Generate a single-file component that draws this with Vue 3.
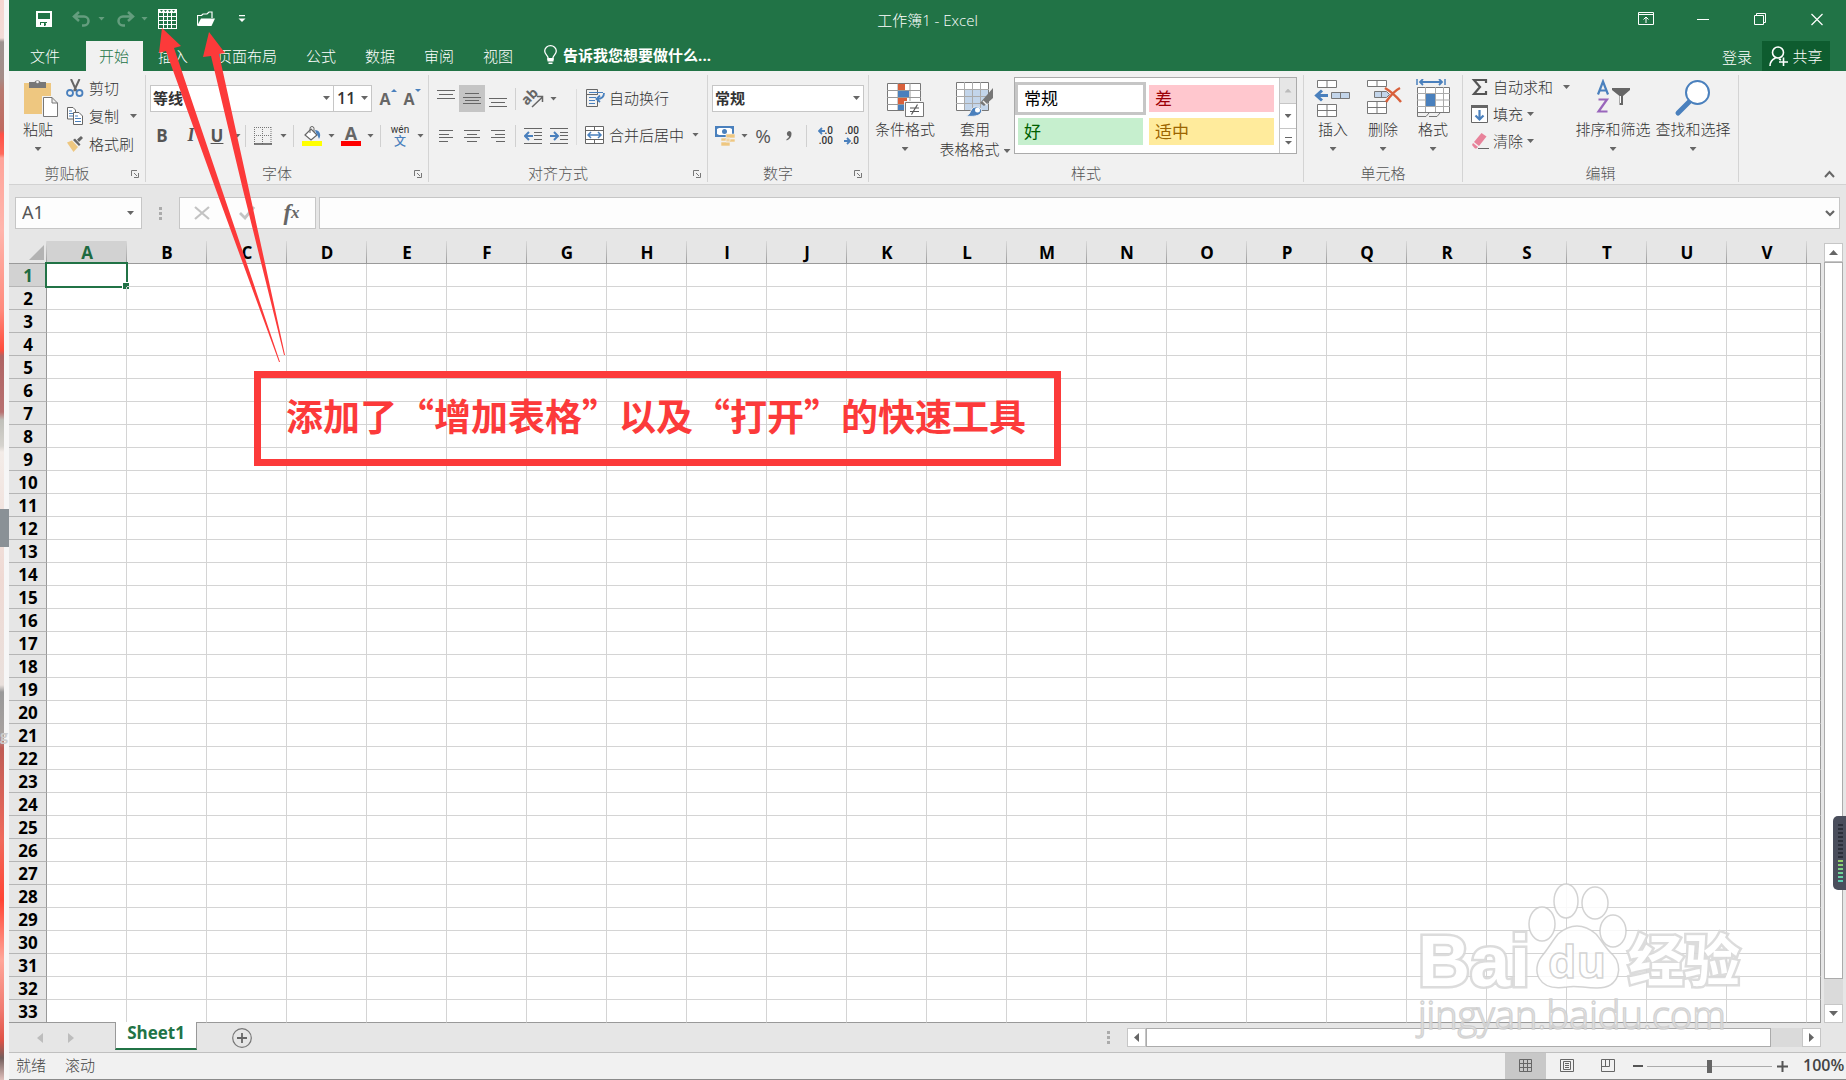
<script setup>
import { ref } from 'vue'

const tabs = ['插入', '页面布局', '公式', '数据', '审阅', '视图']
const columns = 'ABCDEFGHIJKLMNOPQRSTUV'.split('')
const rows = Array.from({ length: 33 }, (_, i) => i + 1)
const fontName = ref('等线')
const fontSize = ref('11')
const numberFormat = ref('常规')
const formula = ref('')
const nameBox = ref('A1')
const zoom = ref(100)
</script>

<template>
  <div class="desktop" lang="zh-CN">
    <aside class="edge">
      <div class="edge-photo"></div>
      <div class="edge-grip"></div>
      <span class="edge-letter">g</span>
    </aside>

    <main class="excel">
      <header class="titlebar">
        <div class="quick">
          <button class="plain" aria-label="保存">
            <svg width="16" height="16" viewBox="0 0 16 16"><path d="M1 1h14v14H1z" fill="none" stroke="#fff" stroke-width="2" /><path d="M1 8h14v3H1z" fill="#fff" /><path d="M1 8h3v8H1zM12 8h3v8h-3zM4 8h8v1H4zM4 11h8v4H10v-2.500H8V15H4z" fill="#fff" /><path d="M5 12h3v3H5z" fill="#fff" /><path d="M2 2h12v5H2zM4 11h1v3H4zM5 11h6v1H5zM8 12h1.500v3H8z" fill="#217346" /></svg>
          </button>
          <button class="plain m20 dim" aria-label="撤消">
            <svg width="20" height="16" viewBox="0 0 20 16"><path d="M7 1L2 5.500 7 10M3 5.500h9a4.500 4.500 0 0 1 0 9h-2" fill="none" stroke="#fff" stroke-width="2.500" /></svg>
          </button>
          <i class="caret white m6 dim"></i>
          <button class="plain m10 dim" aria-label="恢复">
            <svg width="20" height="16" viewBox="0 0 20 16"><path d="M13 1l5 4.500-5 4.500M17 5.500H8a4.500 4.500 0 0 0 0 9h2" fill="none" stroke="#fff" stroke-width="2.500" /></svg>
          </button>
          <i class="caret white m6 dim"></i>
          <button class="plain m10" aria-label="增加表格">
            <svg width="19" height="20" viewBox="0 0 19 20"><path d="M0 0h19v20H0z" fill="#fff" /><path d="M1 4h4v3H1zM6 4h3v3H6zM10 4h3v3h-3zM14 4h4v3h-4zM1 8h4v3H1zM6 8h3v3H6zM10 8h3v3h-3zM14 8h4v3h-4zM1 12h4v3H1zM6 12h3v3H6zM10 12h3v3h-3zM14 12h4v3h-4zM1 16h4v3H1zM6 16h3v3H6zM10 16h3v3h-3zM14 16h4v3h-4zM2 1h3L3.500 3zM6 1h3L7.500 3zM10 1h3l-1.500 2zM14 1h3l-1.500 2z" fill="#217346" /></svg>
          </button>
          <button class="plain m20" aria-label="打开">
            <svg width="18" height="16" viewBox="0 0 18 16"><path d="M.5 14V4.500h4L6 3h4l2-2h3v6" fill="none" stroke="#fff" stroke-width="1.200" /><path d="M0 15L4 7.500h14L14.500 15z" fill="#fff" /></svg>
          </button>
          <button class="plain m20" aria-label="自定义快速访问工具栏">
            <svg width="13" height="8" viewBox="0 0 13 8"><path d="M4 .5h6" stroke="#fff" stroke-width="1.500" /><path d="M3.500 3.500h7L7 7z" fill="#fff" /></svg>
          </button>
        </div>
        <h1>工作簿1 - Excel</h1>
        <div class="window-buttons">
          <button aria-label="功能区显示选项"><svg width="16" height="14" viewBox="0 0 16 14"><path d="M.5.500h15v12H.5zM.5 2.500h15M8 11V5M5.500 7.500L8 5l2.500 2.500" fill="none" stroke="#fff" /></svg></button>
          <button aria-label="最小化"><svg width="12" height="14" viewBox="0 0 12 14"><path d="M0 7.500h12" stroke="#fff" /></svg></button>
          <button aria-label="还原"><svg width="12" height="14" viewBox="0 0 12 14"><path d="M.5 3.500h9v9h-9zM2.500 3V1.500h9v9H10" fill="none" stroke="#fff" /></svg></button>
          <button aria-label="关闭"><svg width="12" height="14" viewBox="0 0 12 14"><path d="M.5 2l11 11M11.500 2l-11 11" stroke="#fff" stroke-width="1.200" /></svg></button>
        </div>
      </header>

      <nav class="tabs">
        <button class="file">文件</button>
        <button class="tab active">开始</button>
        <button v-for="t in tabs" :key="t" class="tab">{{ t }}</button>
        <button class="tell">
          <svg width="13" height="20" viewBox="0 0 13 20"><path d="M4 14.500v-2C3.500 10.500.7 9 .7 6a5.800 5.300 0 0 1 11.600 0c0 3-2.800 4.500-3.300 6.500v2z" fill="none" stroke="#fff" stroke-width="1.300" /><path d="M3.500 13h6v3.500h-6zM4.500 17.500h4V19h-4z" fill="#fff" /></svg>
          <b>告诉我您想要做什么...</b>
        </button>
        <button class="login">登录</button>
        <button class="share">
          <svg width="19" height="21" viewBox="0 0 19 21"><circle cx="9" cy="6.500" r="5.500" fill="none" stroke="#fff" stroke-width="1.600" /><path d="M1 20c0-4 2-6.500 5.500-8M10 13l2 1M10 16h9M14.500 11.500V20" fill="none" stroke="#fff" stroke-width="1.600" /></svg>
          共享
        </button>
      </nav>

      <section class="ribbon">
        <div class="group clip">
          <div class="body">
            <button class="big w46">
              <svg width="40" height="38" viewBox="0 0 40 38"><path d="M6 4h27v31H6z" fill="#eec780" /><path d="M11 9V3h5.500a3.500 3.500 0 0 1 6 0H28v6z" fill="#777" /><circle cx="19.500" cy="3" r="1.300" fill="#f1f1f1" /><path d="M24 17h16v21H24z" fill="#f1f1f1" /><path d="M25.500 18.500h8.500l5.500 5.500v13.500h-14zM34 18.500V24h5.500" fill="#fff" stroke="#777" /></svg>
              <span>粘贴</span><i class="caret"></i>
            </button>
            <div class="list">
              <button class="row28"><svg width="18" height="18" viewBox="0 0 18 18"><path d="M5 0l5.500 12M13.500 0L8 12" stroke="#666" stroke-width="2" /><circle cx="4" cy="14" r="3" fill="none" stroke="#4a80bd" stroke-width="1.800" /><circle cx="13.500" cy="14" r="3" fill="none" stroke="#4a80bd" stroke-width="1.800" /></svg>剪切</button>
              <button class="row28"><svg width="18" height="18" viewBox="0 0 18 18"><path d="M1.500.500H7L9.500 3v9h-8z" fill="#fff" stroke="#666" /><path d="M3 4h3M3 6.500h4M3 9h4" stroke="#4a80bd" /><path d="M7.500 5.500H13l3.500 3.500v8.500h-9z" fill="#fff" stroke="#666" /><path d="M9 9h3M9 11.500h6M9 14.500h6" stroke="#4a80bd" /></svg>复制<i class="caret m6"></i></button>
              <button class="row28"><svg width="18" height="18" viewBox="0 0 18 18"><path d="M1 7.500l5-2 6 6.500-4.500 5z" fill="#eec780" /><path d="M7 5l2-1.500 5.500 6L13 11zM11 4.500l4-3.500 2 2-4 4z" fill="#666" /></svg>格式刷</button>
            </div>
          </div>
          <div class="foot"><span>剪贴板</span><button class="launch" aria-label="剪贴板选项"><svg width="8" height="8"><path d="M.5 6V.500H6M3 3l3 3M7.500 3v4.500H3" fill="none" stroke="#777" /></svg></button></div>
        </div>

        <div class="group font">
          <div class="body stack">
            <div class="line">
              <label class="combo w184"><select v-model="fontName" aria-label="字体"><option>等线</option></select><i class="caret"></i></label>
              <label class="combo w39"><select v-model="fontSize" aria-label="字号"><option>11</option></select><i class="caret"></i></label>
              <button class="plain m6 grow-font" aria-label="增大字号"><b>A</b><svg width="6" height="4"><path d="M0 3l3-3 3 3z" fill="#4a80bd" /></svg></button>
              <button class="plain m4 grow-font" aria-label="减小字号"><b>A</b><svg width="6" height="4"><path d="M0 0l3 3 3-3z" fill="#4a80bd" /></svg></button>
            </div>
            <div class="line">
              <button class="letter bold">B</button>
              <button class="letter italic m6">I</button>
              <button class="letter under m4">U</button>
              <i class="caret m6"></i><i class="sep m4"></i>
              <button class="plain m8" aria-label="边框"><svg width="18" height="18" viewBox="0 0 18 18"><path d="M.5 0v17M17 0v17M8.500 0v17M0 .5h18M0 8.500h18" stroke="#777" stroke-dasharray="1 1" /><path d="M0 17h18" stroke="#555" stroke-width="1.500" /></svg></button>
              <i class="caret m8"></i><i class="sep m6"></i>
              <button class="plain m8" aria-label="填充颜色"><svg width="20" height="20" viewBox="0 0 20 20"><path d="M3 9l6-6 6 6-6 5z" fill="#fff" stroke="#666" stroke-width="1.200" /><path d="M8 7V2.500a2 2 0 0 1 4 0V6" fill="none" stroke="#666" /><path d="M13 4c4 0 7 4 4 9-1-2-1-4-3-6z" fill="#4a80bd" /><path d="M0 15h20v5H0z" fill="#ff0" /></svg></button>
              <i class="caret m6"></i>
              <button class="plain m6 ink"><b>A</b></button>
              <i class="caret m6"></i><i class="sep m6"></i>
              <button class="plain m10 pinyin"><span>wén</span><b>文</b></button>
              <i class="caret m8"></i>
            </div>
          </div>
          <div class="foot"><span>字体</span><button class="launch" aria-label="字体选项"><svg width="8" height="8"><path d="M.5 6V.500H6M3 3l3 3M7.500 3v4.500H3" fill="none" stroke="#777" /></svg></button></div>
        </div>

        <div class="group align">
          <div class="body">
            <div class="stack">
              <div class="line">
                <button class="cell" aria-label="顶端对齐"><svg width="18" height="18"><path d="M0 .5h18M2 4.500h14M0 8.500h18" stroke="#666" /></svg></button>
                <button class="cell on" aria-label="垂直居中"><svg width="18" height="18"><path d="M2 3.500h14M0 7.500h18M2 10.500h14M0 13.500h18" stroke="#666" /></svg></button>
                <button class="cell" aria-label="底端对齐"><svg width="18" height="18"><path d="M0 8.500h18M2 12.500h14M0 16.500h18" stroke="#666" /></svg></button>
                <i class="sep m4"></i>
                <button class="plain m8" aria-label="方向"><svg class="spill" width="20" height="20" viewBox="0 0 20 20"><text transform="translate(6 8) rotate(-45)" y="4" text-anchor="middle" font-size="14" font-weight="700" font-family="Open Sans, sans-serif" fill="#666">ab</text><path d="M8 18L18 8.500M13 7.500h5.500V13" fill="none" stroke="#666" stroke-width="1.500" /></svg></button>
                <i class="caret m6"></i>
              </div>
              <div class="line">
                <button class="cell" aria-label="左对齐"><svg width="18" height="12"><path d="M2 .5h14M2 4.500h10M2 7.500h14M2 11.500h9" stroke="#666" /></svg></button>
                <button class="cell" aria-label="居中"><svg width="18" height="12"><path d="M1 .5h16M4 4.500h10M1 7.500h16M4 11.500h10" stroke="#666" /></svg></button>
                <button class="cell" aria-label="右对齐"><svg width="18" height="12"><path d="M2 .5h14M6 4.500h10M2 7.500h14M7 11.500h9" stroke="#666" /></svg></button>
                <i class="sep m4"></i>
                <button class="plain m8" aria-label="减少缩进量"><svg width="18" height="18"><path d="M0 1.500h18M10 5.500h8M10 8.500h8M10 12.500h8M0 16.500h18" stroke="#666" /><path d="M9 9H2M5 5L1 9l4 4" fill="none" stroke="#4a80bd" stroke-width="2" /></svg></button>
                <button class="plain m8" aria-label="增加缩进量"><svg width="18" height="18"><path d="M0 1.500h18M10 5.500h8M10 8.500h8M10 12.500h8M0 16.500h18" stroke="#666" /><path d="M0 9h7M4 5l4 4-4 4" fill="none" stroke="#4a80bd" stroke-width="2" /></svg></button>
              </div>
            </div>
            <i class="sep tall"></i>
            <div class="stack pad8">
              <button class="line gap4"><svg width="20" height="20" viewBox="0 0 20 20"><path d="M1.500 1.500h11v5M1.500 6.500h11M1.500 1.500v17h11v-7M1.500 6.500h11" fill="none" stroke="#666" /><path d="M4 4.500h14M4 9.500h7M4 12.500h6M4 15.500h6" stroke="#4a80bd" /><path d="M19 5c0 5-3 6-7 6M15 7.500L11.500 11l3.500 3" fill="none" stroke="#4a80bd" stroke-width="1.800" /></svg>自动换行</button>
              <button class="line gap4"><svg width="20" height="20" viewBox="0 0 20 20"><path d="M.5 1.500h18v17H.5zM.5 5.500h18M.5 14.500h18M9.500 1.500v4M9.500 14.500v4" fill="#fff" stroke="#666" /><path d="M3 10h13M6 7l-3 3 3 3M13 7l3 3-3 3" fill="none" stroke="#4a80bd" stroke-width="1.500" /></svg>合并后居中<i class="caret m4"></i></button>
            </div>
          </div>
          <div class="foot"><span>对齐方式</span><button class="launch" aria-label="对齐选项"><svg width="8" height="8"><path d="M.5 6V.500H6M3 3l3 3M7.500 3v4.500H3" fill="none" stroke="#777" /></svg></button></div>
        </div>

        <div class="group number">
          <div class="body stack">
            <div class="line">
              <label class="combo w152"><select v-model="numberFormat" aria-label="数字格式"><option>常规</option></select><i class="caret"></i></label>
            </div>
            <div class="line pad3">
              <button class="plain" aria-label="会计数字格式"><svg width="20" height="20" viewBox="0 0 20 20"><path d="M0 0h19v11H0z" fill="#4a80bd" /><path d="M2 3l2-1h11l2 1v5l-2 1H4L2 8z" fill="#fff" /><circle cx="9.500" cy="5.500" r="2.500" fill="#4a80bd" /><path d="M11 8h9v4h-9zM11 13h9v3h-9zM6 12h9v3H6zM6 16h9v4H6z" fill="#eec780" stroke="#f1f1f1" stroke-width=".6" /></svg></button>
              <i class="caret m6"></i>
              <button class="plain m6 percent">%</button>
              <button class="plain m12 comma" aria-label="千位分隔样式"><svg width="8" height="12" viewBox="0 0 8 12"><path d="M4 1a2.800 2.800 0 0 1 2.500 3c0 3-2 5.500-5 6.500V9.200C3 8.500 4 7.500 4 6.300A2.700 2.700 0 0 1 4 1z" fill="#666" /></svg></button>
              <i class="sep m12"></i>
              <button class="plain m8 decimals" aria-label="增加小数位数"><span><svg width="7" height="8"><path d="M7 4H2M4 1L1 4l3 3" fill="none" stroke="#4a80bd" stroke-width="1.800" /></svg>.0</span><span>.00</span></button>
              <button class="plain m8 decimals" aria-label="减少小数位数"><span>.00</span><span><svg width="7" height="8"><path d="M0 4h5M3 1l3 3-3 3" fill="none" stroke="#4a80bd" stroke-width="1.800" /></svg>.0</span></button>
            </div>
          </div>
          <div class="foot"><span>数字</span><button class="launch" aria-label="数字选项"><svg width="8" height="8"><path d="M.5 6V.500H6M3 3l3 3M7.500 3v4.500H3" fill="none" stroke="#777" /></svg></button></div>
        </div>

        <div class="group styles">
          <div class="body">
            <button class="big w64">
              <svg width="38" height="38" viewBox="0 0 38 38"><path d="M1.500 4.500h33v27h-33z" fill="#fff" stroke="#777" /><path d="M1 11.500h34M1 18.500h34M1 25.500h34M12 4v27M24 4v27" stroke="#999" /><path d="M12 5h7v6h-7zM12 19h9v6h-9z" fill="#d9603b" /><path d="M12 12h11v6H12zM12 26h7v5h-7z" fill="#4a80bd" /><path d="M18 22h20v16H18z" fill="#f1f1f1" /><path d="M19.500 23.500h18v14h-18z" fill="#fff" stroke="#777" /><path d="M24 29h9M24 32.500h9M31.500 25.500l-6 10" stroke="#555" stroke-width="1.200" /></svg>
              <span>条件格式</span><i class="caret"></i>
            </button>
            <button class="big w72">
              <svg width="38" height="38" viewBox="0 0 38 38"><path d="M.5 3.500h32v28H.5z" fill="#fff" stroke="#777" /><path d="M9 11h23v20H9z" fill="#c3d5ea" /><path d="M0 10.500h33M0 17.500h33M0 24.500h33M8.500 3v28M16.500 3v28M24.500 3v28" stroke="#aaa" /><path d="M37 9v10l-9 8-4-3z" fill="#777" /><path d="M27 22l4 4" stroke="#f1f1f1" stroke-width="1.500" /><path d="M10 37c5-1 4-8 9-9 4-1 8 2 6 6-2 3-8 4-15 3z" fill="#4a80bd" stroke="#f1f1f1" /><circle cx="21.500" cy="31" r="2.500" fill="#fff" /></svg>
              <span>套用</span><span>表格格式<i class="caret m4"></i></span>
            </button>
            <div class="gallery">
              <div class="swatches">
                <button class="swatch normal">常规</button><button class="swatch bad">差</button>
                <button class="swatch good">好</button><button class="swatch neutral">适中</button>
              </div>
              <div class="gallery-nav">
                <button class="off" aria-label="上一行"><i class="caret up"></i></button>
                <button aria-label="下一行"><i class="caret"></i></button>
                <button aria-label="更多"><svg width="7" height="8"><path d="M0 .5h7" stroke="#666" /><path d="M0 4h7L3.500 7.500z" fill="#666" /></svg></button>
              </div>
            </div>
          </div>
          <div class="foot"><span>样式</span></div>
        </div>

        <div class="group cells">
          <div class="body">
            <button class="big w50"><svg width="38" height="38" viewBox="0 0 38 38"><path d="M3.500 1.500h19v7h-19zM13 1.500v7M3.500 25.500h19v12h-19zM3.500 31.500h19M13 25.500v12" fill="#fff" stroke="#777" /><path d="M17.500 13.500h18v6h-18zM26.500 13.500v6" fill="#c3d5ea" stroke="#777" /><path d="M14 16.500H3M8 11.500l-5.500 5L8 21.500" fill="none" stroke="#4a80bd" stroke-width="3" /></svg><span>插入</span><i class="caret"></i></button>
            <button class="big w50"><svg width="38" height="38" viewBox="0 0 38 38"><path d="M3.500 1.500h19v6h-19zM13 1.500v6M3.500 22.500h19v12h-19zM3.500 28.500h19M13 22.500v12" fill="#fff" stroke="#777" /><path d="M10.500 12.500h12l3 3-3 3h-12zM17.500 12.500v6" fill="#c3d5ea" stroke="#777" /><path d="M21 9c5 3 11 8 16 14M36 9c-6 3-10 8-14 14" fill="none" stroke="#d9603b" stroke-width="2.500" /></svg><span>删除</span><i class="caret"></i></button>
            <button class="big w50"><svg width="38" height="38" viewBox="0 0 38 38"><path d="M3 0v6M31 0v6" stroke="#4a80bd" stroke-width="1.500" /><path d="M6 3h22M9 0L6 3l3 3M25 0l3 3-3 3" fill="none" stroke="#4a80bd" stroke-width="1.800" /><path d="M3.500 8.500h32v25h-32z" fill="#fff" stroke="#777" /><path d="M3 14.500h33M3 27.500h33M11.500 8v25M21.500 8v25M29.500 8v25M3 21h33" stroke="#aaa" /><path d="M12 15h9v12h-9z" fill="#4a80bd" /><path d="M3.500 33v4.500H12l3-3.500M15 37.500h8l3-3.500" fill="none" stroke="#777" /></svg><span>格式</span><i class="caret"></i></button>
          </div>
          <div class="foot"><span>单元格</span></div>
        </div>

        <div class="group edit">
          <div class="body">
            <div class="list edit-list">
              <button class="row27"><svg width="18" height="18" viewBox="0 0 18 18"><path d="M15 5V2H3l6 7-6 7h12v-3" fill="none" stroke="#555" stroke-width="2.200" /></svg>自动求和<i class="caret m6"></i></button>
              <button class="row27"><svg width="18" height="18" viewBox="0 0 18 18"><path d="M.5.500h16v17H.5z" fill="#fff" stroke="#666" /><path d="M0 0h17v3H0z" fill="#666" /><path d="M8.500 5v9M4.500 10.500l4 4 4-4" fill="none" stroke="#4a80bd" stroke-width="2.200" /></svg>填充<i class="caret"></i></button>
              <button class="row27"><svg width="18" height="18" viewBox="0 0 18 18"><path d="M10.500 1l5 3.500L8 14l-5-4z" fill="#e8829a" /><path d="M2 11l5 4-1.500 1.500H4L1 13z" fill="#e8829a" /><path d="M7 16.500h11" stroke="#666" /></svg>清除<i class="caret"></i></button>
            </div>
            <button class="big w80"><svg width="38" height="38" viewBox="0 0 38 38"><path d="M4 15.500L9 2.500l5 13M5.800 11.500h6.500" fill="none" stroke="#4a80bd" stroke-width="2.200" /><path d="M4.500 20.500h8.500l-8.500 12h9" fill="none" stroke="#9966bb" stroke-width="2.200" /><path d="M18 9h18v2l-7 6v9h-3.500v-9L18 11z" fill="#666" /><path d="M26.500 17v7" stroke="#fff" /></svg><span>排序和筛选</span><i class="caret"></i></button>
            <button class="big w80"><svg width="38" height="38" viewBox="0 0 38 38"><path d="M4 34l12-12" stroke="#4a80bd" stroke-width="5" stroke-linecap="round" /><circle cx="23.500" cy="13.500" r="11.500" fill="#fff" stroke="#4a80bd" stroke-width="2" /></svg><span>查找和选择</span><i class="caret"></i></button>
          </div>
          <div class="foot"><span>编辑</span></div>
        </div>
        <button class="collapse" aria-label="折叠功能区"><svg width="11" height="8"><path d="M1 7l4.500-5L10 7" fill="none" stroke="#666" stroke-width="2" /></svg></button>
      </section>

      <section class="formula-bar">
        <label class="name-box"><input v-model="nameBox" aria-label="名称框"><i class="caret"></i></label>
        <i class="dots"></i>
        <div class="fx-box">
          <button aria-label="取消"><svg width="16" height="14"><path d="M1 1l14 12M15 1L1 13" stroke="#c3c3c3" stroke-width="2.200" /></svg></button>
          <button aria-label="输入"><svg width="16" height="14"><path d="M1 7l5 5 9-11" fill="none" stroke="#c3c3c3" stroke-width="2.800" /></svg></button>
          <button class="fx"><i>f</i><i>x</i></button>
        </div>
        <label class="formula"><input v-model="formula" aria-label="编辑栏"><svg width="10" height="7"><path d="M1 1l4 4 4-4" fill="none" stroke="#666" stroke-width="2.200" /></svg></label>
      </section>

      <section class="work">
        <div class="sheet">
          <table>
            <colgroup><col class="c-head"><col v-for="c in columns" :key="c" class="c-cell"><col></colgroup>
            <thead>
              <tr>
                <th class="corner"><svg width="15" height="15"><path d="M15 0v15H0z" fill="#b3b3b3" /></svg></th>
                <th v-for="c in columns" :key="c" scope="col" :class="{ sel: c === 'A' }">{{ c }}</th>
                <th class="last"></th>
              </tr>
            </thead>
            <tbody>
              <tr v-for="r in rows" :key="r">
                <th scope="row" :class="{ sel: r === 1 }">{{ r }}</th>
                <td v-for="c in columns" :key="c"><div v-if="r === 1 && c === 'A'" class="cursor"></div></td>
                <td class="last"></td>
              </tr>
            </tbody>
          </table>
        </div>
        <div class="vscroll">
          <button aria-label="向上滚动"><svg width="9" height="5"><path d="M0 5l4.500-5L9 5z" fill="#666" /></svg></button>
          <div class="vthumb"></div>
          <div class="vtrack"></div>
          <button aria-label="向下滚动"><svg width="9" height="5"><path d="M0 0l4.500 5L9 0z" fill="#666" /></svg></button>
        </div>
      </section>

      <section class="sheet-bar">
        <button class="nav" aria-label="上一个工作表"><svg width="6" height="10"><path d="M6 0v10L0 5z" fill="#bdbdbd" /></svg></button>
        <button class="nav" aria-label="下一个工作表"><svg width="6" height="10"><path d="M0 0v10l6-5z" fill="#bdbdbd" /></svg></button>
        <button class="sheet-tab">Sheet1</button>
        <button class="add" aria-label="新工作表"><svg width="20" height="20"><circle cx="10" cy="10" r="9.300" fill="none" stroke="#777" stroke-width="1.200" /><path d="M10 5v10M5 10h10" stroke="#666" stroke-width="1.800" /></svg></button>
        <i class="dots"></i>
        <div class="hscroll">
          <button aria-label="向左滚动"><svg width="5" height="9"><path d="M5 0v9L0 4.500z" fill="#666" /></svg></button>
          <div class="hthumb"></div>
          <div class="htrack"></div>
          <button aria-label="向右滚动"><svg width="5" height="9"><path d="M0 0v9l5-4.500z" fill="#666" /></svg></button>
        </div>
      </section>

      <footer class="status">
        <span>就绪</span><span>滚动</span>
        <div class="views">
          <button class="on" aria-label="普通"><svg width="14" height="14"><path d="M.5.500h12v12H.5zM4.500 0v13M8.500 0v13M0 4.500h13M0 8.500h13" fill="none" stroke="#666" /></svg></button>
          <button aria-label="页面布局"><svg width="14" height="14"><path d="M.5.500h13v12H.5zM3.500 2.500h7v8h-7zM5 4.500h4M5 6.500h4M5 8.500h4" fill="none" stroke="#666" /></svg></button>
          <button aria-label="分页预览"><svg width="14" height="14"><path d="M.5.500h13v12H.5zM4.500 0v7M0 7.500h8.500V0" fill="none" stroke="#666" /></svg></button>
        </div>
        <button class="zoom-step" aria-label="缩小"><svg width="10" height="10"><path d="M0 5h10" stroke="#555" stroke-width="2" /></svg></button>
        <input v-model="zoom" type="range" min="10" max="190" aria-label="缩放级别">
        <button class="zoom-step" aria-label="放大"><svg width="11" height="11"><path d="M0 5.500h11M5.500 0v11" stroke="#555" stroke-width="2" /></svg></button>
        <b class="percent-label">{{ zoom }}%</b>
      </footer>
    </main>

    <div class="callout">添加了“增加表格”以及“打开”的快速工具</div>
    <svg class="arrows" width="300" height="370" viewBox="0 0 300 370">
      <path d="M162 28L181 46 174 48 222 190 280 362 279 362 216 190 166 51 159 53z" fill="#fc3a3a" />
      <path d="M209 32L225 53 219 54 249 190 285 355 284 355 243 190 211 56 203 57z" fill="#fc3a3a" />
    </svg>

    <svg class="watermark" width="340" height="170" viewBox="0 0 340 170">
      <g fill="#fff" fill-opacity=".85" stroke="#c8c8c8" stroke-opacity=".8" stroke-width="1.500">
        <g class="thick">
          <text x="8" y="106" font-size="72" font-weight="700" font-family="Liberation Sans, sans-serif">Bai</text>
          <text x="218" y="101" font-size="56" font-weight="700" font-family="Noto Sans CJK SC, sans-serif">经验</text>
        </g>
        <ellipse cx="132" cy="44" rx="13" ry="17" /><ellipse cx="156" cy="21" rx="12" ry="17" /><ellipse cx="185" cy="23" rx="13" ry="16" /><ellipse cx="203" cy="51" rx="13" ry="16" />
        <path d="M148 54q19-16 38 0c6 7 10 15 17 21 10 10 8 33-16 33-14 0-20-3-30-1-30 5-36-18-25-31 6-7 11-16 16-22z" />
        <text x="138" y="98" font-size="45" font-weight="700" font-family="Open Sans, sans-serif">du</text>
        <text x="8" y="149" font-size="38" font-family="Open Sans, sans-serif">jingyan.baidu.com</text>
      </g>
    </svg>
    <div class="meter"><div class="meter-bars"></div></div>
  </div>
</template>

<style>
body { margin: 0; background: #e6e6e6; overflow: hidden; }
</style>

<style scoped>
* { box-sizing: border-box; }
.desktop { display: flex; position: relative; min-height: 100vh; font: 15px/20px "Open Sans", "Noto Sans CJK SC", sans-serif; font-weight: 300; color: #333; }
button { border: 0; background: none; padding: 0; margin: 0; font: inherit; color: inherit; display: flex; align-items: center; justify-content: center; white-space: nowrap; }
svg { display: block; flex: none; }
b { font-weight: 700; }

.edge { position: relative; flex: none; width: 9px; background: #f6f6f6; }
.edge-photo { width: 4px; height: 100%; background: linear-gradient(#f5d5d0 0, #f3dcd8 38px, #9c9290 42px, #a58d88 78px, #b97a70 90px, #c06a60 130px, #ff5046 134px, #ff6a5c 154px, #ffa49a 158px, #ffb5ac 230px, #ff8a7c 310px, #ff4c3c 350px, #b06464 356px, #b87070 412px, #c0c0ba 420px, #d5d3ce 446px, #f3ece8 452px, #efd9d3 580px, #e9e0dc 685px, #999 692px, #a8a2a0 735px, #bf5c55 748px, #f06a5c 840px, #ff4434 900px, #ffa79a 960px, #f07a70 1010px, #e05246 1040px, #74605e 1058px, #e0c0bc 1080px); }
.edge-grip { position: absolute; left: 0; top: 509px; width: 9px; height: 38px; background: #8a9196; }
.edge-letter { position: absolute; left: 0; top: 726px; width: 9px; color: #ccc; font-size: 14px; font-weight: 700; }

.excel { flex: 1; min-width: 0; display: flex; flex-direction: column; border-bottom: 1px solid #8a8a8a; background: #e6e6e6; }

.titlebar { display: grid; grid-template-columns: 1fr auto 1fr; height: 41px; background: #217346; color: #fff; }
.quick { display: flex; align-items: center; padding: 0 0 4px 27px; }
.dim { opacity: .3; }
h1 { margin: 0; font-size: 15px; line-height: 40px; font-weight: 300; }
.window-buttons { display: flex; justify-content: flex-end; padding-right: 1px; }
.window-buttons button { width: 57px; height: 38px; }

.m2 { margin-left: 2px; } .m4 { margin-left: 4px; } .m6 { margin-left: 6px; } .m8 { margin-left: 8px; }
.m10 { margin-left: 10px; } .m12 { margin-left: 12px; } .m20 { margin-left: 20px; }
.caret { display: inline-block; flex: none; width: 7px; height: 4px; background: #666; clip-path: polygon(0 0, 100% 0, 50% 100%); vertical-align: middle; }
.caret.white { background: #fff; }
.caret.up { clip-path: polygon(0 100%, 100% 100%, 50% 0); background: #bbb; }

.tabs { display: flex; height: 30px; background: #217346; color: #fff; }
.file { width: 77px; padding-right: 5px; }
.tab { padding: 0 14px 1px 13px; margin-right: 2px; }
.tab.active { background: #f1f1f1; color: #217346; }
.tell { gap: 6px; margin-left: 15px; padding-bottom: 3px; }
.login { margin-left: auto; padding-top: 2px; margin-right: 10px; }
.share { width: 68px; gap: 4px; margin-right: 16px; background: #0e5c2f; }

.ribbon { display: flex; position: relative; padding: 4px 0 2px; background: #f1f1f1; border-bottom: 1px solid #d2d2d2; }
.group { display: flex; flex-direction: column; flex: none; border-right: 1px solid #d4d4d4; }
.clip { width: 137px; } .font { width: 283px; } .align { width: 279px; } .number { width: 161px; }
.styles { width: 435px; } .cells { width: 159px; } .edit { width: 276px; }
.body { display: flex; height: 91px; padding-left: 4px; align-items: flex-start; }
.foot { display: flex; height: 16px; line-height: 14px; color: #555; }
.foot span { flex: 1; text-align: center; }
.launch { width: 20px; height: 16px; }
.big { flex-direction: column; justify-content: flex-start; padding-top: 4px; flex: none; }
.big svg { margin-bottom: 2px; }
.big > .caret { margin-top: 8px; }
.w46 { width: 46px; margin-left: 2px; } .w50 { width: 50px; } .w64 { width: 64px; } .w72 { width: 72px; margin-left: 2px; } .w80 { width: 80px; }
.list { display: flex; flex-direction: column; align-items: flex-start; margin-left: 5px; }
.row28 { height: 28px; gap: 5px; padding-bottom: 2px; }
.row27 { height: 27px; gap: 4px; padding-bottom: 3px; }
.edit-list { width: 102px; margin-left: 4px; }

.stack { display: flex; flex-direction: column; justify-content: flex-start; align-items: flex-start; gap: 10px; padding-top: 10px; }
.line { display: flex; align-items: center; height: 27px; }
button.line { padding-bottom: 2px; }
.gap4 { gap: 4px; } .pad3 { padding-left: 3px; } .pad8 { padding-left: 8px; }
.sep { width: 1px; height: 22px; background: #d0d0d0; }
.sep.tall { height: 56px; margin: 14px 0 0 8px; background: #dcdcdc; }
.combo { position: relative; display: block; height: 27px; }
.combo select { appearance: none; width: 100%; height: 100%; border: 1px solid #c6c6c6; border-radius: 0; background: #fff; padding: 0 2px 1px; font: 600 15px/20px "Open Sans", "Noto Sans CJK SC", sans-serif; color: #333; }
.combo .caret { position: absolute; right: 4px; top: 11px; }
.w184 { width: 184px; } .w39 { width: 39px; margin-left: -1px; } .w152 { width: 152px; }
.combo.w39 select { padding-left: 3px; font-size: 16px; }
.grow-font { width: 20px; align-items: flex-start; color: #666; font-size: 16px; }
.letter { width: 22px; height: 27px; color: #555; font-size: 17px; }
.bold { width: 24px; font-weight: 700; }
.italic { font: italic 700 18px "Liberation Serif", serif; }
.under { font-weight: 700; text-decoration: underline; }
.ink { width: 20px; height: 20px; font-size: 18px; line-height: 14px; align-items: flex-start; border-bottom: 5px solid #f00; color: #666; }
.pinyin { width: 18px; flex-direction: column; font: 400 10px/11px Roboto, sans-serif; }
.pinyin b { color: #4a80bd; font: 500 12px/12px "Noto Sans CJK SC", sans-serif; }
.spill { overflow: visible; }
.cell { width: 26px; height: 27px; }
.cell.on { background: #c5c5c5; }
.percent { width: 18px; font-size: 19px; font-weight: 400; color: #555; }
.comma { width: 10px; }
.decimals { width: 18px; flex-direction: column; align-items: flex-end; font: 500 10px/10px Roboto, sans-serif; }
.decimals span { display: flex; align-items: center; }

.gallery { display: flex; margin: 2px 0 0 3px; width: 283px; height: 77px; border: 1px solid #ababab; background: #fff; }
.swatches { display: grid; flex: 1; grid-template-columns: 125px 125px; grid-template-rows: 27px 27px; gap: 6px; padding: 7px 0 0 3px; }
.swatch { justify-content: flex-start; padding-left: 6px; font-size: 17px; font-weight: 400; }
.normal { color: #000; outline: 3px solid #c6c6c6; }
.bad { background: #ffc7ce; color: #9c0006; }
.good { background: #c6efce; color: #006100; }
.neutral { background: #ffeb9c; color: #9c6500; }
.gallery-nav { display: grid; grid-template-rows: repeat(3, 1fr); width: 17px; border-left: 1px solid #c6c6c6; }
.gallery-nav button + button { border-top: 1px solid #c6c6c6; }
.off { background: #e6e6e6; }
.collapse { position: absolute; right: 11px; bottom: 6px; }

.formula-bar { display: flex; align-items: center; height: 56px; padding: 0 6px; }
.name-box { position: relative; width: 127px; height: 32px; }
.name-box input, .formula input { width: 100%; height: 100%; border: 1px solid #c6c6c6; background: #fdfdfd; padding: 0 6px 2px; font: 18px "Noto Sans", sans-serif; color: #555; border-radius: 0; display: block; }
.name-box .caret { position: absolute; right: 8px; top: 14px; }
.dots { width: 3px; height: 13px; margin: 0 17px; background: repeating-linear-gradient(#ababab 0 3px, transparent 3px 5px); }
.fx-box { display: flex; width: 137px; height: 32px; border: 1px solid #c6c6c6; background: #fdfdfd; }
.fx-box button { flex: 1; padding-right: 2px; }
.fx-box .fx { font: 700 23px/30px "Liberation Serif", serif; color: #666; }
.fx i + i { font-size: 17px; }
.formula { position: relative; flex: 1; height: 32px; margin-left: 3px; }
.formula svg { position: absolute; right: 5px; top: 13px; }

.work { display: flex; flex: 1; }
.sheet { flex: 1; min-width: 0; overflow: hidden; }
table { width: 100%; table-layout: fixed; border-collapse: separate; border-spacing: 0; background: #fff; }
.c-head { width: 38px; } .c-cell { width: 80px; }
th, td { height: 23px; padding: 0; line-height: 20px; overflow: hidden; }
td { position: relative; overflow: visible; border-right: 1px solid #d4d4d4; border-bottom: 1px solid #d4d4d4; }
th { padding: 2px 0 0 1px; background: #e6e6e6; color: #000; font-size: 17px; font-weight: 700; }
thead th { border-bottom: 1px solid #999; border-right: 1px solid; border-image: linear-gradient(#dcdcdc, #999) 1; }
tbody th { border-right: 1px solid #999; border-bottom: 1px solid #b5b5b5; }
th.sel { background: #d2d2d2; color: #1e6a41; }
.corner svg { margin: 0 2px 2px auto; }
td.last { border-right: 1px solid #999; }
th.last { border: 0; border-bottom: 1px solid #999; }
tbody tr:last-child > * { border-bottom-color: #999; }
.cursor { position: absolute; left: -2px; top: -2px; width: 83px; height: 26px; border: 2px solid #217346; }
.cursor::after { content: ""; position: absolute; right: -3px; bottom: -3px; width: 6px; height: 6px; background: #217346; border: 1px solid #fff; border-width: 1px 0 0 1px; }

.vscroll { display: flex; flex-direction: column; flex: none; width: 20px; margin: 2px 2px 0 3px; }
.vscroll button, .hscroll button { flex: none; width: 19px; height: 19px; background: #fff; border: 1px solid #c6c6c6; }
.vthumb { flex: 1; width: 19px; background: #fff; border: 1px solid #ababab; }
.vtrack { width: 19px; height: 25px; background: #dadada; }

.sheet-bar { display: flex; align-items: center; height: 30px; border-bottom: 1px solid #c0c0c0; padding-right: 25px; }
.nav { width: 6px; margin-left: 28px; }
.nav + .nav { margin-left: 25px; }
.sheet-tab { position: relative; align-self: flex-start; width: 82px; height: 28px; margin: -1px 0 0 41px; padding-bottom: 4px; background: #fff; border: 1px solid #999; border-top: 0; border-bottom: 2px solid #217346; color: #217346; font-size: 17px; font-weight: 700; }
.add { margin: 0 auto 0 35px; }
.hscroll { display: flex; width: 694px; height: 19px; }
.hthumb { flex: 1; background: #fff; border: 1px solid #ababab; }
.htrack { width: 31px; background: #dadada; }

.status { display: flex; align-items: center; height: 26px; background: #f1f1f1; color: #444; }
.status > span { margin-left: 7px; width: 42px; padding-bottom: 2px; }
.views { display: flex; margin-left: auto; height: 26px; }
.views button { width: 41px; }
.views .on { background: #c8c8c8; }
.zoom-step { width: 12px; margin: 0 3px 0 4px; }
input[type="range"] { appearance: none; width: 125px; height: 14px; margin: 0; background: linear-gradient(#ababab, #ababab) 0 50% / 100% 1px no-repeat; }
input[type="range"]::-webkit-slider-thumb { appearance: none; width: 5px; height: 13px; background: #666; border-radius: 0; }
.status .percent-label { width: 43px; margin: 0 0 2px 12px; font-size: 16px; font-weight: 600; overflow: hidden; }

.callout { position: absolute; left: 254px; top: 371px; width: 807px; height: 95px; border: 7px solid #fc3a3a; padding-left: 25px; font: 700 37px/74px "Noto Sans CJK SC", sans-serif; color: #fc3a3a; white-space: nowrap; }
.arrows { position: absolute; left: 0; top: 0; pointer-events: none; }
.watermark { position: absolute; right: 96px; top: 880px; pointer-events: none; }
.thick { fill-opacity: 1; stroke-opacity: .9; stroke-width: 5px; paint-order: stroke; stroke: #d8d8d8; }
.meter { position: absolute; right: 0; top: 816px; width: 13px; height: 74px; padding: 8px 3px 8px 5px; background: #4a4e5c; border-radius: 5px 0 0 5px; }
.meter-bars { height: 58px; background: repeating-linear-gradient(transparent 0 2px, #4a4e5c 2px 4px), linear-gradient(#2c303b 0 60%, #9ccf60 60%, #58d0b8 100%); }
</style>
